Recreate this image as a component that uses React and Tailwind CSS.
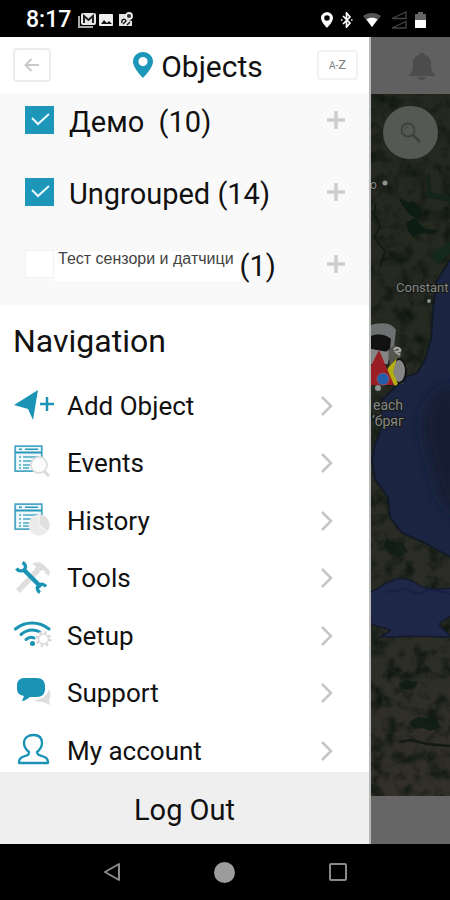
import React from "react";

const navItems = [
  { label: "Add Object", Icon: AddObjectIcon },
  { label: "Events", Icon: EventsIcon },
  { label: "History", Icon: HistoryIcon },
  { label: "Tools", Icon: ToolsIcon },
  { label: "Setup", Icon: SetupIcon },
  { label: "Support", Icon: SupportIcon },
  { label: "My account", Icon: AccountIcon },
];

function PinIcon({ className }) {
  return (
    <svg viewBox="0 0 20 26" className={className} fill="currentColor" aria-hidden="true">
      <path
        fillRule="evenodd"
        d="M10 0C4.4 0 0 4.3 0 9.6 0 16.500 10 26 10 26s10-9.500 10-16.400C20 4.300 15.600 0 10 0Zm0 5a4.600 4.600 0 1 1 0 9.200A4.600 4.600 0 0 1 10 5Z"
      />
    </svg>
  );
}

function AddObjectIcon() {
  return (
    <svg viewBox="0 0 42 36" className="h-9 w-[42px]" aria-hidden="true">
      <path d="M0 17 24 2 19 32 14 21Z" fill="#1b93b5" />
      <path d="M33 9v14M26 16h14" stroke="#1b93b5" strokeWidth="2.500" />
    </svg>
  );
}

function WindowShape() {
  return (
    <g>
      <path d="M1.200 1.200h26.600v25H1.200Z" fill="#eff8fb" stroke="#4ba8c5" strokeWidth="1.800" />
      <path d="M1 7.500h27" stroke="#2b98ba" strokeWidth="2" />
      <path d="M5 4.200h3M11 4.200h13" stroke="#2b98ba" strokeWidth="1.600" />
      <path d="M5 12h2M5 16h2M5 20h2M5 23h2" stroke="#4ba8c5" strokeWidth="1.500" />
      <path d="M9 12h15M9 16h9M9 20h7M9 23h6" stroke="#4ba8c5" strokeWidth="1.500" />
    </g>
  );
}

function EventsIcon() {
  return (
    <svg viewBox="0 0 38 36" className="h-9 w-[38px]" aria-hidden="true">
      <WindowShape />
      <circle cx="25" cy="20" r="8" fill="#fcfcfc" stroke="#dedede" strokeWidth="1.800" />
      <path d="m30 26 5 5" stroke="#dadada" strokeWidth="2.800" />
    </svg>
  );
}

function HistoryIcon() {
  return (
    <svg viewBox="0 0 38 36" className="h-9 w-[38px]" aria-hidden="true">
      <WindowShape />
      <circle cx="25" cy="22" r="10.500" fill="#ebebeb" />
      <path d="M25 22V11.500A10.500 10.500 0 0 1 33.500 28Z" fill="#e0e0e0" />
      <path d="M25 12v10l8 6" stroke="#fafafa" strokeWidth="1" fill="none" />
    </svg>
  );
}

function ToolsIcon() {
  return (
    <svg viewBox="0 0 38 36" className="h-9 w-[38px]" fill="none" aria-hidden="true">
      <path d="M4 31 24 10" stroke="#dedede" strokeWidth="5.500" />
      <path d="M18 4c5-3 10-2 13 2l5 5-1 5-4-3-1-3-4 1-3 3-3-4 2-3c-1-2-2-2-4-3Z" fill="#dedede" />
      <path d="m9 9 18 18" stroke="#1b93b5" strokeWidth="4.500" />
      <path d="M8.500 2.500c3 1.500 4 5 2 7s-6 2-8-1M26 32.500c-3-2-3.500-5-1.500-7s5-2 7.500 1" stroke="#1b93b5" strokeWidth="3.400" />
    </svg>
  );
}

function SetupIcon() {
  return (
    <svg viewBox="0 0 40 36" className="h-9 w-10" fill="none" aria-hidden="true">
      <g stroke="#1b93b5" strokeWidth="3" strokeLinecap="round">
        <path d="M1.500 11C11 3 25 3 35 11" />
        <path d="M7 16.500c6-5 13-5.500 19-2.500" />
        <path d="M12 21.500c3-2.500 6-2.500 8-1.500" />
      </g>
      <circle cx="18.500" cy="25.500" r="2.500" fill="#1b93b5" />
      <circle cx="29.500" cy="21" r="6.500" stroke="#dadada" strokeWidth="3" strokeDasharray="2.500 2.600" />
      <circle cx="29.500" cy="21" r="5" fill="#fff" stroke="#dadada" strokeWidth="1.500" />
    </svg>
  );
}

function SupportIcon() {
  return (
    <svg viewBox="0 0 38 36" className="h-9 w-[38px]" aria-hidden="true">
      <path d="M35 14c2 4 2 8 0 11l1 5-7-3c-4 0-7-1-9-2 7 0 13-4 15-11Z" fill="#dedede" />
      <path d="M10 3h13c5 0 8 3 8 8v3c0 5-3 8-8 8h-7c-3 2-5 4-8 4l2-5c-5-1-7-3-7-8v-3c0-4 3-7 7-7Z" fill="#1b93b5" />
    </svg>
  );
}

function AccountIcon() {
  return (
    <svg viewBox="0 0 38 36" className="h-9 w-[38px]" aria-hidden="true">
      <path
        d="M15 19c-4-3-5-6-5-9 0-5 4-8 9.500-8S28 5 28 10c0 3-1 6-5 9 0 3 2 3 5 4s6 2 6 6v1H5v-1c0-4 3-5 6-6s4-1 4-4Z"
        fill="none"
        stroke="#1b93b5"
        strokeWidth="2.300"
        strokeLinejoin="round"
      />
    </svg>
  );
}

function StatusBar() {
  return (
    <header className="flex h-[37px] shrink-0 items-center justify-between bg-black pt-0.5 pr-6 pl-[26px] text-white">
      <div className="flex items-center">
        <span className="w-[52px] text-[23px] leading-6 font-medium">8:17</span>
        <svg viewBox="0 0 56 16" className="h-4 w-14" aria-hidden="true">
          <path d="M1 4v11h14" fill="none" stroke="#aaa" strokeWidth="2" />
          <rect x="3" y="1" width="15" height="12" rx="2" fill="#e8e8e8" />
          <path d="M6 11V4l4.500 4L15 4v7" fill="none" stroke="#222" strokeWidth="2" />
          <rect x="21" y="2" width="14" height="12" rx="1" fill="#eee" />
          <path d="m23 12 3-4 3 3 2-2 3 3Z" fill="#111" />
          <path d="M41 2h7v5l6 2v5H41Z" fill="#e5e5e5" />
          <path d="M44 11c-1-4 3-5 4-2l-3 3M49 13l3-3" fill="none" stroke="#111" strokeWidth="1.300" />
          <circle cx="51" cy="4" r="3" fill="#333" stroke="#eee" strokeWidth="1.800" />
        </svg>
      </div>
      <div className="flex items-center gap-2">
        <PinIcon className="h-4 w-3" />
        <svg viewBox="0 0 12 16" className="h-4 w-3" fill="none" stroke="#fff" strokeWidth="1.700" aria-hidden="true">
          <path d="m2 4 7 7-3.500 4V1L9 5l-7 7" />
          <path d="M0 8h1.500M10 8h1.500" />
        </svg>
        <svg viewBox="0 0 18 16" className="mx-0.5 h-4 w-[18px]" aria-hidden="true">
          <path d="M0 4c5-4 13-4 18 0L9 15Z" fill="#555" />
          <path d="M3.500 7.500c3-2.500 8-2.500 11 0L9 15Z" fill="#fff" />
        </svg>
        <svg viewBox="0 0 16 18" className="h-[18px] w-4" fill="none" stroke="#444" strokeWidth="1.300" aria-hidden="true">
          <path d="M1 7.500 15 1v6.500ZM1 17l14-6.500V17Z" />
        </svg>
        <svg viewBox="0 0 11 16" className="h-4 w-[11px]" aria-hidden="true">
          <path d="M3 0h5v2h3v6H0V2h3Z" fill="#666" />
          <path d="M0 8h11v8H0Z" fill="#fff" />
        </svg>
      </div>
    </header>
  );
}

function GroupRow({ id, checked, children }) {
  return (
    <li className="flex h-[54px] items-center">
      <span className="grid h-7 w-[29px] shrink-0">
        <input
          id={id}
          type="checkbox"
          defaultChecked={checked}
          className="peer col-start-1 row-start-1 m-0 h-7 w-[29px] appearance-none border border-[#f0f0f0] bg-white checked:border-[#1c97ba] checked:bg-[#1c97ba]"
        />
        <svg
          viewBox="0 0 29 28"
          className="pointer-events-none invisible col-start-1 row-start-1 h-7 w-[29px] peer-checked:visible"
          fill="none"
          stroke="#e8f8ff"
          strokeWidth="2"
          aria-hidden="true"
        >
          <path d="m7 12 6 6L24 8" />
        </svg>
      </span>
      <label htmlFor={id} className="flex flex-1 items-center pt-[3px] text-[29px] leading-8 whitespace-pre">
        {children}
      </label>
      <button type="button" aria-label="Expand group" className="mr-6">
        <svg viewBox="0 0 18 18" className="h-[18px] w-[18px]" stroke="#cdcdcd" strokeWidth="3.500" aria-hidden="true">
          <path d="M9 0v18M0 9h18" />
        </svg>
      </button>
    </li>
  );
}

function Drawer() {
  return (
    <aside className="flex min-h-0 flex-col border-r-2 border-[#b8b8b8] bg-white">
      <div className="flex h-14 shrink-0 items-center justify-between pr-[11px] pl-[13px]">
        <button
          type="button"
          aria-label="Back"
          className="flex h-[34px] w-[38px] items-center justify-center rounded border-2 border-[#ececec]"
        >
          <svg viewBox="0 0 16 14" className="h-3.5 w-4" fill="none" stroke="#c8c8c8" strokeWidth="2" aria-hidden="true">
            <path d="M15 7H2M7.500 1l-6 6 6 6" />
          </svg>
        </button>
        <h1 className="flex flex-1 items-center justify-center gap-2 pl-7 text-[30px] leading-8">
          <PinIcon className="h-[26px] w-5 text-[#1c97ba]" />
          <span className="pt-[3px]">Objects</span>
        </h1>
        <button
          type="button"
          className="h-[30px] w-[41px] rounded border-2 border-[#f2f2f2] text-center text-[13px] leading-4 text-[#808080]"
        >
          <span className="text-[10px]">A-</span>Z
        </button>
      </div>

      <ul className="flex shrink-0 flex-col gap-[18px] bg-[#f9f9f9] pb-3.5 pl-[25px]">
        <GroupRow id="group-demo" checked>
          <span className="pl-[15px]">Демо  (10)</span>
        </GroupRow>
        <GroupRow id="group-ungrouped" checked>
          <span className="pl-[15px]">Ungrouped (14)</span>
        </GroupRow>
        <GroupRow id="group-test">
          <span className="h-[30px] bg-white pr-1.5 pl-1 font-['Liberation_Sans',Arial,sans-serif] text-[16px] leading-4 text-[#444]">
            Тест сензори и датчици
          </span>
          <span>(1)</span>
        </GroupRow>
      </ul>

      <h2 className="shrink-0 pt-[18px] pl-[13px] text-[32px] leading-9">Navigation</h2>
      <nav className="flex min-h-0 flex-1 flex-col justify-between pt-[25px]">
        {navItems.map(({ label, Icon }) => (
          <a key={label} href="#" className="flex h-[43px] shrink-0 items-center pr-9 pl-3.5 text-[26px] leading-8">
            <span className="w-[53px] shrink-0">
              <Icon />
            </span>
            <span className="flex-1">{label}</span>
            <svg viewBox="0 0 13 20" className="h-5 w-[13px]" fill="none" stroke="#c6c6c6" strokeWidth="2.500" aria-hidden="true">
              <path d="m2 1 9 9-9 9" />
            </svg>
          </a>
        ))}
      </nav>
      <button type="button" className="h-[72px] shrink-0 bg-[#efefef] pt-1 text-[29px] leading-8">
        Log Out
      </button>
    </aside>
  );
}

function SatelliteMap() {
  return (
    <svg
      viewBox="0 0 79 702"
      preserveAspectRatio="xMinYMin slice"
      className="h-full w-full"
      role="img"
      aria-label="Satellite map"
    >
      <defs>
        <filter id="terrain" x="0" y="0" width="100%" height="100%" colorInterpolationFilters="sRGB">
          <feTurbulence type="fractalNoise" baseFrequency="0.070" numOctaves="5" seed="8" />
          <feColorMatrix values="0 0 0 0 0.05  0 0 0 0 0.09  0 0 0 0 0.06  2.400 0 0 0 -1.050" />
        </filter>
        <filter id="soft" x="-50%" y="-50%" width="200%" height="200%">
          <feGaussianBlur stdDeviation="7" />
        </filter>
        <linearGradient id="land" x1="0" y1="0" x2="0" y2="1">
          <stop offset="0" stopColor="#25281f" />
          <stop offset="0.400" stopColor="#272a21" />
          <stop offset="0.750" stopColor="#2c2d27" />
          <stop offset="1" stopColor="#332f29" />
        </linearGradient>
        <clipPath id="blackSea">
          <path d="M79 166 65 188 62 216 60 245 54 266 46 279 34 283 21 296 11 306 9 339 4 349 1 366 4 386 17 403 19 423 31 439 54 449 79 463Z" />
        </clipPath>
      </defs>
      <rect width="79" height="702" fill="url(#land)" />
      <rect width="79" height="702" filter="url(#terrain)" />
      <g fill="#0d1b15">
        <path d="m28 104 9 4 6-1 9 11-4 8-9-5-8-10ZM36 128l8-4 4 5 6 6 14 1-5 4-14-1-7 4-5-6Z" />
        <path d="m56 80 3 0 1 18 19 4v6l-23-4Z" fill="#14241b" />
        <path d="m79 147-16 11-3 7 8 4 11-10Z" fill="#14281c" />
        <path d="m12 452 4-7 16 5 5 8-10 6-9-4Z" opacity="0.700" />
        <path d="m27 590 8-4 12 2-4 7-12 0ZM38 628l9-5 17 2 6 8-10 4-8-3-9 1Z" opacity="0.800" />
      </g>
      <path d="m5 109-2 11 6 12-6 12 11 13-5 16" fill="none" stroke="#111711" strokeWidth="1.500" />
      <path d="m28 648 12-2 16 4 23 2" fill="none" stroke="#131a15" strokeWidth="2.500" />
      <g clipPath="url(#blackSea)">
        <rect width="79" height="480" fill="#1b2542" />
        <path d="M85 292c-28 5-38 25-30 60l15 55 20 20V290Z" fill="#151c31" filter="url(#soft)" />
      </g>
      <path
        d="M79 166 65 188 62 216 60 245 54 266 46 279 34 283 21 296 11 306 9 339 4 349 1 366 4 386 17 403 19 423 31 439 54 449 79 463"
        fill="none"
        stroke="#121a25"
        strokeWidth="2"
        strokeLinejoin="round"
      />
      <path
        d="M-2 498C8 496 10 491 17 488c8-4 17-5 26 0 9 6 13 8 38 6v27l-12 8c-2 4 5 7 12 14-25 0-43-2-59 0H9l10-6c-3-5-14-2-21-9Z"
        fill="#1f2749"
        stroke="#131a29"
        strokeWidth="1.500"
      />
      <path d="m15 498 20-3 12 5 12-5 20 5" fill="none" stroke="#182040" strokeWidth="2" />
      <g fill="#858783" stroke="#171a17" strokeWidth="2" paintOrder="stroke">
        <text x="-1" y="95" className="text-[12px]">o</text>
        <text x="25" y="198" className="text-[13px]">Constant</text>
        <text x="2" y="316" className="text-[14px]">each</text>
        <text x="1" y="332" className="text-[14px]">‘бряг</text>
      </g>
      <circle cx="14" cy="89" r="2.500" fill="#91938f" />
      <circle cx="58" cy="207" r="2" fill="#8b8f91" />
      <g>
        <path d="M0 231c8-3 21-3 25 5l-2 17-6 15H0Z" fill="#6d7070" />
        <path d="M0 242c8-3 16-1 20 3l-1 10-5 3-14-3Z" fill="#111" />
        <path d="M0 255 17 258v12H0Z" fill="#858585" />
        <path d="m18 256 5-5 8 4-2 10 7 7-4 18-13-3Z" fill="#55564d" />
        <path d="M23 256c2-4 7-2 6 1l-4 1 4 3" fill="none" stroke="#aaa" strokeWidth="2" />
        <ellipse cx="28" cy="277" rx="7" ry="12" fill="#858585" stroke="#111" strokeWidth="2" />
        <path d="m17 274 9-10-4 14 5 12-3 2-9-13Z" fill="#b5ae10" />
        <path d="m8 256 15 35H0v-19Z" fill="#991e23" />
        <circle cx="12" cy="285" r="6" fill="#245da9" stroke="#8a5669" />
        <circle cx="7" cy="294" r="3" fill="#8e928f" />
      </g>
    </svg>
  );
}

function DimmedMapPane() {
  return (
    <section className="flex min-h-0 flex-col bg-[#242820]">
      <div className="flex h-[57px] shrink-0 items-center justify-end bg-[#606060] pr-[15px]">
        <button type="button" aria-label="Notifications">
          <svg viewBox="0 0 26 28" className="h-7 w-[26px]" fill="#4c4c4c" aria-hidden="true">
            <path d="M11 1h4l1 2c4 1 6 4 6 9 0 6 1 8 4 11v1H0v-1c3-3 4-5 4-11 0-5 2-8 6-9Zm-2 24h8c-1 4-7 4-8 0Z" />
          </svg>
        </button>
      </div>
      <div className="relative min-h-0 flex-1 overflow-hidden">
        <SatelliteMap />
        <button
          type="button"
          aria-label="Search map"
          className="absolute top-3 right-3 flex h-[53px] w-[55px] items-center justify-center rounded-full bg-[#555853]"
        >
          <svg viewBox="0 0 22 22" className="h-[22px] w-[22px]" fill="none" stroke="#3d403b" aria-hidden="true">
            <circle cx="8" cy="8" r="6.500" strokeWidth="1.800" />
            <path d="M4.500 8A4 4 0 0 1 8 4.500" />
            <path d="m13 13 7 7" strokeWidth="2.500" />
          </svg>
        </button>
      </div>
      <div className="h-12 shrink-0 bg-[#666]" />
    </section>
  );
}

function SystemNavigation() {
  return (
    <footer className="flex h-14 shrink-0 items-center justify-around bg-black px-14">
      <button type="button" aria-label="System back">
        <svg viewBox="0 0 18 20" className="h-5 w-[18px]" fill="none" stroke="#8a8a8a" strokeWidth="2" aria-hidden="true">
          <path d="M16 2v16L2 10Z" strokeLinejoin="round" />
        </svg>
      </button>
      <button type="button" aria-label="Home" className="h-[21px] w-[21px] rounded-full bg-[#9c9c9c]" />
      <button type="button" aria-label="Recent apps" className="h-[18px] w-[18px] rounded-xs border-2 border-[#8a8a8a]" />
    </footer>
  );
}

export default function App() {
  return (
    <div className="flex h-screen flex-col overflow-hidden bg-black font-[Roboto,sans-serif] text-[#111]">
      <StatusBar />
      <main className="grid min-h-0 flex-1 grid-cols-[371fr_79fr] grid-rows-[minmax(0,1fr)]">
        <Drawer />
        <DimmedMapPane />
      </main>
      <SystemNavigation />
    </div>
  );
}
